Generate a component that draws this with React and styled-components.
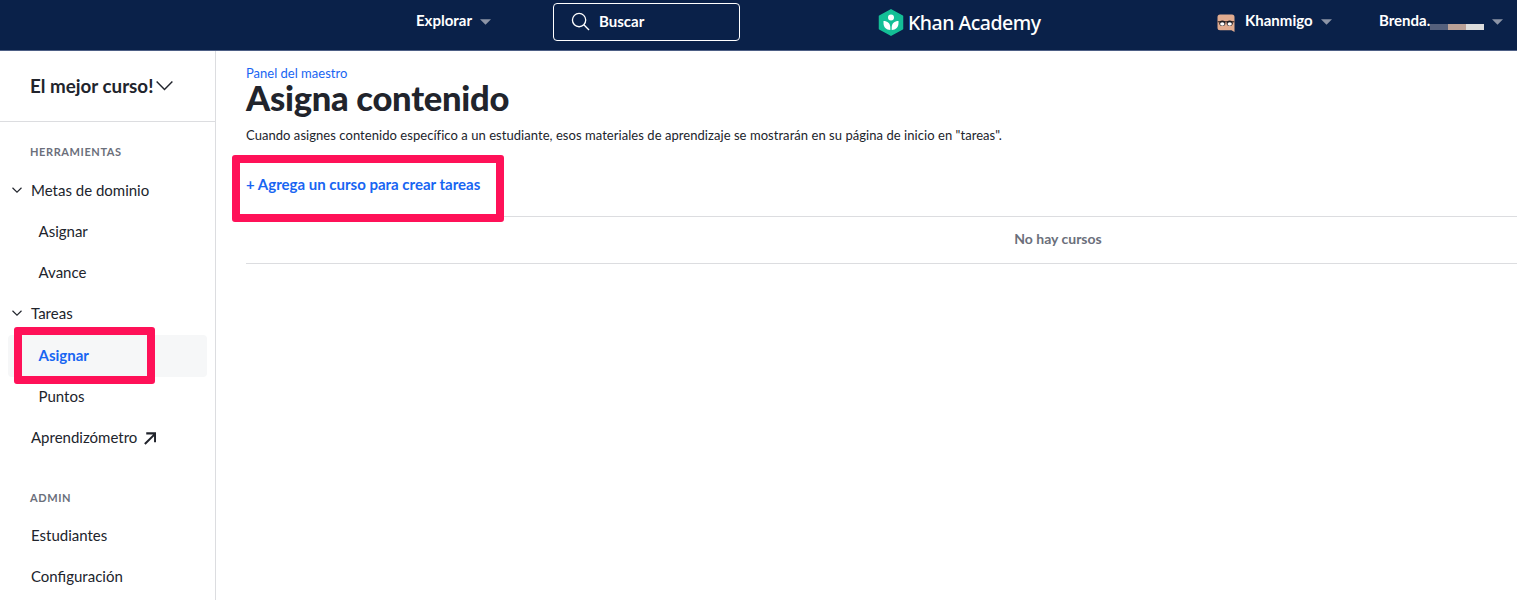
import React from "react"
import styled, { createGlobalStyle } from "styled-components"

const GlobalStyle = createGlobalStyle`
  html, body {
    margin: 0;
    padding: 0;
    background: #fff;
    overflow: hidden;
  }
  body {
    font-family: Lato, "Noto Sans", sans-serif;
    color: #21242c;
  }
`

function Caret() {
  return (
    <CaretSvg viewBox="0 0 12 6">
      <path d="M0 0h12L6 6z" fill="#8d94a6" />
    </CaretSvg>
  )
}

function Chevron({ size, stroke }) {
  return (
    <svg width={size} height={size} viewBox="0 0 16 16" fill="none" style={{ flexShrink: 0 }}>
      <path d="M2 5l6 6 6-6" stroke="#21242c" strokeWidth={stroke} />
    </svg>
  )
}

function Logo() {
  return (
    <svg width="26" height="27" viewBox="0 0 26 27">
      <path d="M13 0.800l11.500 6.400v12.600L13 26.200 1.500 19.800V7.200z" fill="#14bf96" stroke="#14bf96" strokeLinejoin="round" strokeWidth="1.500" />
      <circle cx="13" cy="8.500" r="3" fill="#fff" />
      <path d="M5.500 12c4 0 6.800 2.300 6.800 6.500v2.500c-4.300-.2-6.800-3-6.800-7z" fill="#fff" />
      <path d="M20.500 12c-4 0-6.800 2.300-6.800 6.500v2.500c4.300-.2 6.800-3 6.800-7z" fill="#fff" />
    </svg>
  )
}

function KhanmigoIcon() {
  return (
    <KhanmigoSvg viewBox="0 0 18 18">
      <path d="M3 .5h12a2.500 2.500 0 0 1 2.500 2.500v15l-3-1.800H3a2.500 2.500 0 0 1-2.500-2.500V3A2.500 2.500 0 0 1 3 .5z" fill="#e0ab8f" />
      <rect x=".5" y="7" width="17" height="1.400" fill="#5b4038" />
      <ellipse cx="5.300" cy="9.300" rx="3" ry="2.800" fill="#1b1b22" />
      <ellipse cx="12.700" cy="9.300" rx="3" ry="2.800" fill="#1b1b22" />
      <ellipse cx="5.300" cy="10" rx="2.200" ry="1.700" fill="#fff" />
      <ellipse cx="12.700" cy="10" rx="2.200" ry="1.700" fill="#fff" />
    </KhanmigoSvg>
  )
}

function App() {
  return (
    <>
      <GlobalStyle />
      <Page>
        <TopBar>
          <NavItem $left={416}>Explorar<Caret /></NavItem>
          <SearchBox>
            <svg width="19" height="19" viewBox="0 0 20 20" fill="none" stroke="#fff" strokeWidth="1.400" style={{ marginTop: 2 }}>
              <circle cx="8.500" cy="8.500" r="7" />
              <path d="M13.500 13.500l5.500 5.500" />
            </svg>
            Buscar
          </SearchBox>
          <Brand>
            <Logo />
            <BrandName>Khan Academy</BrandName>
          </Brand>
          <NavItem $left={1217}>
            <KhanmigoIcon />
            <KhanmigoLabel>Khanmigo</KhanmigoLabel>
            <Caret />
          </NavItem>
          <NavItem $left={1379}>
            Brenda.
            <Redacted>
              <i /><i /><i />
            </Redacted>
            <UserCaret><Caret /></UserCaret>
          </NavItem>
        </TopBar>

        <Body>
          <Sidebar>
            <CourseHeader>
              <CourseName>El mejor curso!</CourseName>
              <Chevron size={21} stroke={1.1} />
            </CourseHeader>
            <SideNav>
              <SectionLabel>HERRAMIENTAS</SectionLabel>
              <GroupRow><Chevron size={12} stroke={1.5} />Metas de dominio</GroupRow>
              <SubRow>Asignar</SubRow>
              <SubRow>Avance</SubRow>
              <GroupRow><Chevron size={12} stroke={1.5} />Tareas</GroupRow>
              <SubRow $active>
                Asignar
                <Highlight $top={-8} $left={6} $width={141} $height={57} />
              </SubRow>
              <SubRow>Puntos</SubRow>
              <PlainRow>
                Aprendizómetro
                <svg width="13" height="13" viewBox="0 0 14 14" fill="none" stroke="#21242c" strokeWidth="2.200" style={{ marginTop: 2 }}>
                  <path d="M2 13L13 2M3.500 1.500h9.500v9.500" />
                </svg>
              </PlainRow>
              <AdminLabel>ADMIN</AdminLabel>
              <PlainRow>Estudiantes</PlainRow>
              <PlainRow>Configuración</PlainRow>
            </SideNav>
          </Sidebar>

          <Main>
            <Crumb>Panel del maestro</Crumb>
            <Title>Asigna contenido</Title>
            <Intro>
              Cuando asignes contenido específico a un estudiante, esos materiales de aprendizaje se mostrarán en su página de inicio en "tareas".
            </Intro>
            <AddRow>
              <AddLink>+ Agrega un curso para crear tareas</AddLink>
              <Highlight $top={11} $left={-14} $width={272} $height={67} />
            </AddRow>
            <EmptyRow>No hay cursos</EmptyRow>
          </Main>
        </Body>
      </Page>
    </>
  )
}

export default App

const Page = styled.div`
  width: 1517px;
  height: 600px;
  display: flex;
  flex-direction: column;
  overflow: hidden;
`

const TopBar = styled.header`
  position: relative;
  height: 50px;
  flex-shrink: 0;
  background: #0a2149;
  border-bottom: 1px solid #4d5f85;
  color: #fff;
`

/* the bar items sit on fixed slots, the bar is a canvas of centred pieces */
const NavItem = styled.div`
  position: absolute;
  top: 0;
  left: ${(p) => p.$left}px;
  height: 40px;
  display: flex;
  align-items: center;
  gap: 8px;
  font-size: 15px;
  font-weight: 700;
`

const CaretSvg = styled.svg`
  width: 11px;
  height: 6px;
  margin-top: 3px;
`

const KhanmigoSvg = styled.svg`
  width: 18px;
  height: 18px;
  margin-top: 5px;
`

const SearchBox = styled.div`
  position: absolute;
  top: 3px;
  left: 553px;
  width: 187px;
  height: 38px;
  box-sizing: border-box;
  padding: 0 0 3px 17px;
  display: flex;
  align-items: center;
  gap: 9px;
  border: 1px solid #fff;
  border-radius: 4px;
  font-size: 15px;
  font-weight: 700;
`

const Brand = styled.div`
  position: absolute;
  top: 9px;
  left: 878px;
  display: flex;
  align-items: center;
  gap: 4px;
`

const BrandName = styled.span`
  font-family: "Noto Sans", sans-serif;
  font-size: 19.500px;
  font-weight: 500;
  letter-spacing: -0.5px;
`

const KhanmigoLabel = styled.span`
  margin-left: 2px;
`

const Redacted = styled.span`
  display: flex;
  margin: 14px 0 0 -8px;
  height: 6px;

  i {
    display: block;
    width: 18px;
    height: 6px;
  }
  i:nth-child(1) { background: #55607c; }
  i:nth-child(2) { background: #b9a096; }
  i:nth-child(3) { background: #dcdcdc; }
`

const UserCaret = styled.span`
  display: flex;
`

const Body = styled.div`
  flex: 1;
  display: flex;
  min-height: 0;
`

const Sidebar = styled.aside`
  width: 216px;
  flex-shrink: 0;
  box-sizing: border-box;
  border-right: 1px solid #dcdde0;
`

const CourseHeader = styled.div`
  height: 71px;
  box-sizing: border-box;
  padding: 0 0 2px 30px;
  display: flex;
  align-items: center;
  gap: 1px;
  border-bottom: 1px solid #dcdde0;
`

const CourseName = styled.span`
  font-size: 18.800px;
  font-weight: 700;
  color: #21242c;
`

const SideNav = styled.nav`
  padding: 0 8px;
`

const SectionLabel = styled.div`
  height: 20px;
  margin: 20px 0 7px;
  padding-left: 22px;
  font-size: 11px;
  line-height: 20px;
  font-weight: 700;
  letter-spacing: 0.6px;
  color: #6b6f7b;
`

const AdminLabel = styled(SectionLabel)`
  margin: 30.700px 0 6px;
`

const GroupRow = styled.div`
  height: 41.200px;
  display: flex;
  align-items: center;
  gap: 8px;
  padding-left: 3px;
  font-size: 15px;
  color: #21242c;
`

const PlainRow = styled.div`
  height: 41.200px;
  display: flex;
  align-items: center;
  gap: 6px;
  padding-left: 23px;
  font-size: 15px;
  color: #21242c;
`

const SubRow = styled.div`
  position: relative;
  box-sizing: border-box;
  height: ${(p) => (p.$active ? "42px" : "41.200px")};
  margin: ${(p) => (p.$active ? "1px 0 -1.500px" : "0")};
  display: flex;
  align-items: center;
  padding: ${(p) => (p.$active ? "0 0 1.500px 30.500px" : "0 0 0 30.500px")};
  border-radius: 4px;
  font-size: 15px;
  font-weight: ${(p) => (p.$active ? 700 : 400)};
  color: ${(p) => (p.$active ? "#1865f2" : "#21242c")};
  background: ${(p) => (p.$active ? "#f6f7f8" : "transparent")};
`

const Highlight = styled.span`
  position: absolute;
  top: ${(p) => p.$top}px;
  left: ${(p) => p.$left}px;
  width: ${(p) => p.$width}px;
  height: ${(p) => p.$height}px;
  box-sizing: border-box;
  border: 8px solid #ff1158;
  border-radius: 3px;
  pointer-events: none;
`

const Main = styled.main`
  flex: 1;
  min-width: 0;
  padding: 14px 0 0 30px;
`

const Crumb = styled.div`
  font-size: 13px;
  line-height: 16px;
  color: #1865f2;
`

const Title = styled.h1`
  margin: 0;
  font-size: 34.500px;
  line-height: 34px;
  font-weight: 900;
  color: #21242c;
  letter-spacing: -0.270px;
`

const Intro = styled.p`
  margin: 11px 0 0;
  font-size: 13px;
  line-height: 18px;
  letter-spacing: 0.05px;
  color: #21242c;
`

const AddRow = styled.div`
  position: relative;
  height: 73px;
  box-sizing: border-box;
  padding-top: 30px;
  border-bottom: 1px solid #dcdde0;
`

const AddLink = styled.span`
  font-size: 15px;
  line-height: 20px;
  font-weight: 700;
  color: #1865f2;
  display: block;
`

const EmptyRow = styled.div`
  height: 47px;
  box-sizing: border-box;
  display: flex;
  align-items: center;
  justify-content: center;
  border-bottom: 1px solid #dcdde0;
  font-size: 14px;
  font-weight: 700;
  color: #6b6f7b;
  padding: 0 0 4px 353px;
`
